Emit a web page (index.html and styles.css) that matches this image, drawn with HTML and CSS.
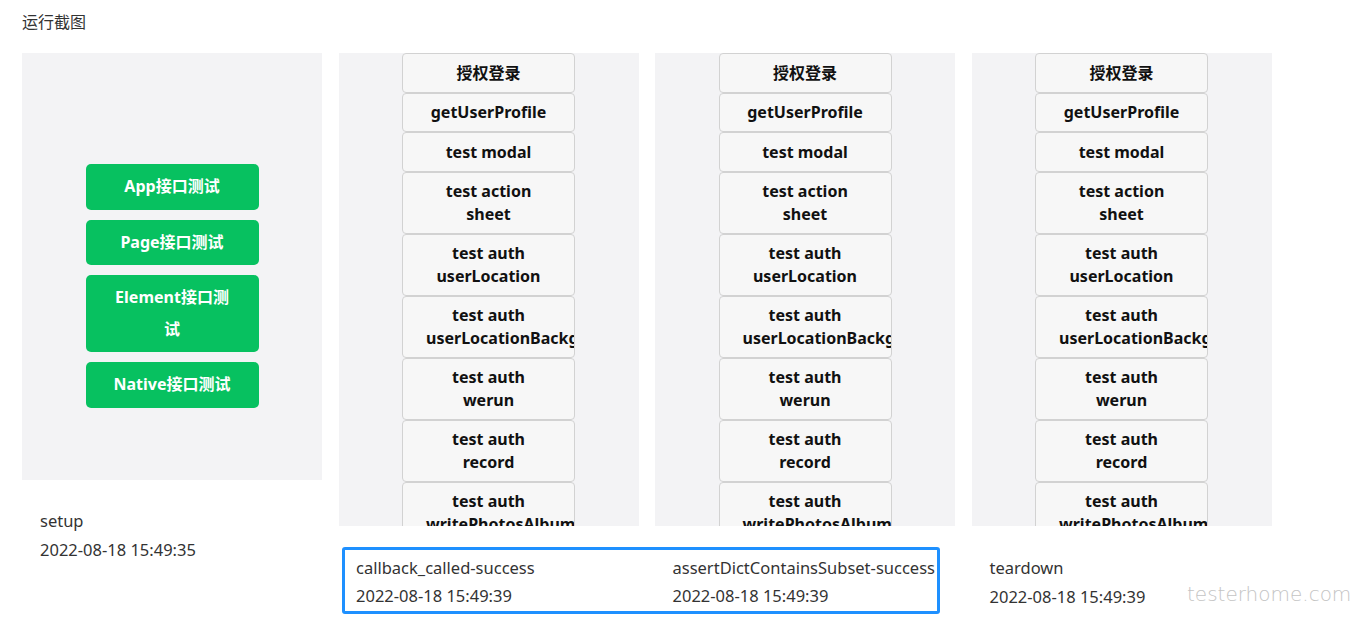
FILE: index.html
```html
<!DOCTYPE html>
<html lang="zh-CN">
<head>
    <meta charset="UTF-8">
    <meta name="viewport" content="width=device-width, initial-scale=1.0">
    <title>运行截图</title>
    <link rel="stylesheet" href="styles.css">
</head>
<body>
    <div class="page">
        <div class="title">运行截图</div>
        <div class="shots">
            <div class="shot-first">
                <div class="screen screen-short">
                    <div class="green-list">
                        <div class="btn-green">App接口测试</div>
                        <div class="btn-green">Page接口测试</div>
                        <div class="btn-green">Element接口测试</div>
                        <div class="btn-green">Native接口测试</div>
                    </div>
                </div>
                <div class="caption caption-first">
                    <div>setup</div>
                    <div>2022-08-18 15:49:35</div>
                </div>
            </div>

            <div class="screen">
                <div class="gray-list">
                    <div class="btn-gray">授权登录</div>
                    <div class="btn-gray">getUserProfile</div>
                    <div class="btn-gray">test modal</div>
                    <div class="btn-gray">test action sheet</div>
                    <div class="btn-gray">test auth userLocation</div>
                    <div class="btn-gray">test auth userLocationBackground</div>
                    <div class="btn-gray">test auth werun</div>
                    <div class="btn-gray">test auth record</div>
                    <div class="btn-gray">test auth writePhotosAlbum</div>
                    <div class="btn-gray">test auth camera</div>
                </div>
            </div>
            <div class="screen">
                <div class="gray-list">
                    <div class="btn-gray">授权登录</div>
                    <div class="btn-gray">getUserProfile</div>
                    <div class="btn-gray">test modal</div>
                    <div class="btn-gray">test action sheet</div>
                    <div class="btn-gray">test auth userLocation</div>
                    <div class="btn-gray">test auth userLocationBackground</div>
                    <div class="btn-gray">test auth werun</div>
                    <div class="btn-gray">test auth record</div>
                    <div class="btn-gray">test auth writePhotosAlbum</div>
                    <div class="btn-gray">test auth camera</div>
                </div>
            </div>
            <div class="screen">
                <div class="gray-list">
                    <div class="btn-gray">授权登录</div>
                    <div class="btn-gray">getUserProfile</div>
                    <div class="btn-gray">test modal</div>
                    <div class="btn-gray">test action sheet</div>
                    <div class="btn-gray">test auth userLocation</div>
                    <div class="btn-gray">test auth userLocationBackground</div>
                    <div class="btn-gray">test auth werun</div>
                    <div class="btn-gray">test auth record</div>
                    <div class="btn-gray">test auth writePhotosAlbum</div>
                    <div class="btn-gray">test auth camera</div>
                </div>
            </div>

            <div class="selected">
                <div class="caption">
                    <div>callback_called-success</div>
                    <div>2022-08-18 15:49:39</div>
                </div>
                <div class="caption">
                    <div>assertDictContainsSubset-success</div>
                    <div>2022-08-18 15:49:39</div>
                </div>
            </div>
            <div class="caption caption-last">
                <div>teardown</div>
                <div>2022-08-18 15:49:39</div>
            </div>
        </div>
        <div class="watermark">testerhome.com</div>
    </div>
</body>
</html>
```

FILE: styles.css
```css
body{
    margin: 0;
    background: #fff;
    font-family: "Noto Sans", "Noto Sans CJK SC", sans-serif;
    color: #333;
}
.page{
    position: relative;
    padding: 11px 22px 0;
    height: 615px;
    overflow: hidden;
}
.title{
    font-size: 16px;
    line-height: 22px;
    margin-bottom: 20px;
}
.shots{
    display: grid;
    grid-template-columns: repeat(4, 300px);
    column-gap: 16.5px;
    align-items: start;
}
.shot-first{
    grid-row: 1 / 3;
}
.screen{
    height: 473px;
    background: #f3f3f5;
    overflow: hidden;
}
.screen-short{
    height: 427px;
}

/* green buttons */
.green-list{
    display: flex;
    flex-direction: column;
    align-items: center;
    gap: 10px;
    padding-top: 111px;
}
.btn-green{
    width: 173px;
    box-sizing: border-box;
    padding: 7px 23px;
    line-height: 31.5px;
    background: #07c160;
    color: #fff;
    font-weight: bold;
    font-size: 16px;
    text-align: center;
    border-radius: 5px;
}

/* gray buttons */
.gray-list{
    display: flex;
    flex-direction: column;
    align-items: center;
}
.btn-gray{
    width: 173px;
    box-sizing: border-box;
    padding: 7.5px 23px;
    line-height: 22.5px;
    background: #f7f7f7;
    border: 1px solid #d2d2d2;
    border-radius: 4px;
    color: #111;
    font-weight: bold;
    font-size: 16px;
    text-align: center;
    overflow: hidden;
    flex-shrink: 0;
}

/* captions */
.caption{
    font-size: 16.5px;
    line-height: 28.5px;
    padding-left: 18px;
    white-space: nowrap;
}
.caption-first{
    margin-top: 27px;
}
.caption-last{
    grid-column: 4;
    margin-top: 28px;
}
.selected{
    grid-column: 2 / 4;
    display: grid;
    grid-template-columns: 316.5px auto;
    margin: 21px 15px 0 3.5px;
    padding: 3.5px 0 0 11px;
    border: 3px solid #1e90ff;
    border-radius: 3px;
}
.selected .caption{
    padding-left: 0;
}

.watermark{
    position: absolute;
    left: 1187px;
    top: 582px;
    font-family: "DejaVu Sans", sans-serif;
    font-weight: 200;
    font-size: 20px;
    color: #c4c4c4;
}
```
